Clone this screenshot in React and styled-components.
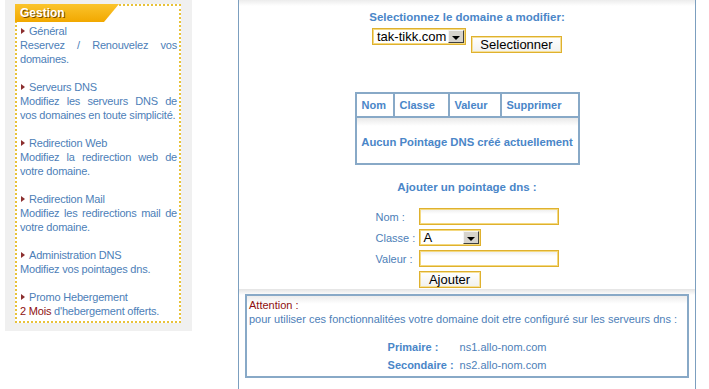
import styled, { createGlobalStyle } from 'styled-components'

const GlobalStyle = createGlobalStyle`
  body {
    margin: 0;
    background: #ffffff;
    font-family: "Liberation Sans", Arial, sans-serif;
    font-size: 11px;
  }
`

const BLUE = '#4d80b8'
const BLUE_BOLD = '#4a86c8'
const GRID = '#88a9c7'
const GOLD = '#dfb12e'
const RED = '#8e0f0f'

const Page = styled.div`
  display: flex;
  align-items: flex-start;
  height: 389px;
  overflow: hidden;
`

/* ---------- left menu ---------- */

const Sidebar = styled.aside`
  width: 187px;
  box-sizing: border-box;
  margin-left: 5px;
  padding: 4px 11px 8px 10px;
  background: #f0f0f0;
`

const MenuBox = styled.div`
  border: 2px dotted #e8c23a;
  background: #ffffff;
`

const MenuTitle = styled.div`
  margin: -2px 0 0 -2px;
  width: 104px;
  height: 18px;
  padding-left: 5px;
  box-sizing: border-box;
  clip-path: polygon(0 0, 100% 0, calc(100% - 15px) 100%, 0 100%);
  background: linear-gradient(#fbc42c, #f2a800);
  color: #ffffff;
  font-size: 12px;
  font-weight: bold;
  line-height: 18px;
  text-shadow: 1px 1px 0 #7a4c00;
`

const MenuList = styled.div`
  padding: 2px 2px 3px 3px;
  color: ${BLUE};
  line-height: 14px;
  letter-spacing: -0.2px;
  text-align: justify;
`

const MenuItem = styled.div`
  & + & {
    margin-top: 14px;
  }
`

const MenuLink = styled.div`
  display: flex;
  align-items: center;
  text-align: left;
`

const Arrow = styled.span`
  width: 0;
  height: 0;
  margin: 0 4px 0 1px;
  border-left: 4px solid #8c2f2f;
  border-top: 3.5px solid transparent;
  border-bottom: 3.5px solid transparent;
`

const Highlight = styled.span`
  color: ${RED};
`

/* ---------- main panel ---------- */

const Main = styled.main`
  margin-left: 46px;
  width: 458px;
  min-height: 389px;
  box-sizing: border-box;
  border-left: 1px solid #7c9fbf;
  border-right: 1px solid #7c9fbf;
  padding-top: 10px;
  background: linear-gradient(#ececec, #ffffff 6px);
  display: flex;
  flex-direction: column;
  align-items: center;
`

const Heading = styled.div`
  margin-top: ${p => p.$top || 0}px;
  color: ${BLUE_BOLD};
  font-size: 11.5px;
  font-weight: bold;
  line-height: 14px;
`

const SelectRow = styled.div`
  margin-top: 4px;
  display: flex;
  align-items: flex-start;
`

const Select = styled.div`
  width: ${p => p.$width}px;
  height: ${p => p.$height}px;
  box-sizing: border-box;
  border: 1px solid ${GOLD};
  box-shadow: inset 0 0 0 1px #f4d980;
  padding: 0 1px 0 4px;
  background: #ffffff;
  display: flex;
  align-items: center;
  justify-content: space-between;
  color: #000000;
  font-size: 13px;
`

const SelectArrow = styled.span`
  width: 16px;
  height: ${p => p.$height}px;
  box-sizing: border-box;
  border: 1px solid;
  border-color: #f4f4f4 #404040 #404040 #f4f4f4;
  background: #d6d3cc;
  display: flex;
  align-items: center;
  justify-content: center;

  &::after {
    content: '';
    margin-top: 2px;
    border-left: 4px solid transparent;
    border-right: 4px solid transparent;
    border-top: 4px solid #000000;
  }
`

const Button = styled.button`
  margin: ${p => p.$margin || 0};
  width: ${p => p.$width}px;
  height: 17px;
  box-sizing: border-box;
  padding: 0;
  border: 1px solid ${GOLD};
  box-shadow: inset 0 0 0 1px #f6e09a;
  background: linear-gradient(#ffffff, #f1f1ee);
  font-family: "Liberation Sans", Arial, sans-serif;
  font-size: 13px;
  line-height: 15px;
  color: #000000;
`

const DnsTable = styled.div`
  margin-top: 39px;
  display: grid;
  grid-template-columns: 38px 55px 52px 76px;
  border: 2px solid ${GRID};
  color: ${BLUE_BOLD};
  font-weight: bold;
  font-size: 11px;
`

const HeadCell = styled.div`
  height: 22px;
  padding-left: 5px;
  border-bottom: 2px solid ${GRID};
  border-right: ${p => (p.$last ? 'none' : `2px solid ${GRID}`)};
  display: flex;
  align-items: center;
  white-space: nowrap;
`

const EmptyCell = styled.div`
  grid-column: 1 / -1;
  height: 45px;
  padding-top: 3px;
  box-sizing: border-box;
  background: linear-gradient(#e9e9e9, #ffffff 8px);
  display: flex;
  align-items: center;
  justify-content: center;
  font-size: 11.3px;
`

const Form = styled.div`
  margin-top: 14px;
  display: grid;
  grid-template-columns: 43px 140px;
  row-gap: 4px;
  align-items: center;
`

const Label = styled.span`
  color: ${BLUE};
  white-space: nowrap;
`

const TextInput = styled.div`
  height: 17px;
  box-sizing: border-box;
  border: 1px solid ${GOLD};
  box-shadow: inset 0 0 0 1px #f4d980;
  background: linear-gradient(#ececec, #ffffff 5px);
`

const NoticeWrap = styled.div`
  align-self: stretch;
  margin-top: 1px;
  padding: 5px 6px 0;
  background: linear-gradient(#e4e4e4, #ffffff 6px);
`

const Notice = styled.div`
  height: 84px;
  box-sizing: border-box;
  border: 2px solid ${GRID};
  padding: 2px 2px 0 2px;
  background: linear-gradient(#ececec, #ffffff 8px);
  color: ${BLUE};
  line-height: 14px;
`

const Servers = styled.div`
  margin: 12px auto 0;
  width: max-content;
  display: grid;
  grid-template-columns: auto auto;
  column-gap: 6px;
  grid-auto-rows: 18px;
  align-items: center;
`

const ServerLabel = styled.span`
  color: ${BLUE_BOLD};
  font-weight: bold;
`

const menu = [
  { title: 'Général', text: 'Reservez / Renouvelez vos domaines.' },
  { title: 'Serveurs DNS', text: 'Modifiez les serveurs DNS de vos domaines en toute simplicité.' },
  { title: 'Redirection Web', text: 'Modifiez la redirection web de votre domaine.' },
  { title: 'Redirection Mail', text: 'Modifiez les redirections mail de votre domaine.' },
  { title: 'Administration DNS', text: 'Modifiez vos pointages dns.' },
]

const App = () => {
  return (
    <>
      <GlobalStyle />
      <Page>
        <Sidebar>
          <MenuBox>
            <MenuTitle>Gestion</MenuTitle>
            <MenuList>
              {menu.map(item => (
                <MenuItem key={item.title}>
                  <MenuLink>
                    <Arrow />
                    {item.title}
                  </MenuLink>
                  <div>{item.text}</div>
                </MenuItem>
              ))}
              <MenuItem>
                <MenuLink>
                  <Arrow />
                  Promo Hebergement
                </MenuLink>
                <div>
                  <Highlight>2 Mois</Highlight> d'hebergement offerts.
                </div>
              </MenuItem>
            </MenuList>
          </MenuBox>
        </Sidebar>

        <Main>
          <Heading>Selectionnez le domaine a modifier:</Heading>
          <SelectRow>
            <Select $width={94} $height={17}>
              tak-tikk.com
              <SelectArrow $height={13} />
            </Select>
            <Button $width={91} $margin="8px 0 0 5px">
              Selectionner
            </Button>
          </SelectRow>

          <DnsTable>
            <HeadCell>Nom</HeadCell>
            <HeadCell>Classe</HeadCell>
            <HeadCell>Valeur</HeadCell>
            <HeadCell $last>Supprimer</HeadCell>
            <EmptyCell>Aucun Pointage DNS créé actuellement</EmptyCell>
          </DnsTable>

          <Heading $top={15}>Ajouter un pointage dns :</Heading>

          <Form>
            <Label>Nom :</Label>
            <TextInput />
            <Label>Classe :</Label>
            <Select $width={62} $height={17}>
              A
              <SelectArrow $height={13} />
            </Select>
            <Label>Valeur :</Label>
            <TextInput />
            <span />
            <Button $width={62}>Ajouter</Button>
          </Form>

          <NoticeWrap>
            <Notice>
              <Highlight>Attention :</Highlight>
              <div>
                pour utiliser ces fonctionnalitées votre domaine doit etre configuré sur les serveurs dns :
              </div>
              <Servers>
                <ServerLabel>Primaire :</ServerLabel>
                <span>ns1.allo-nom.com</span>
                <ServerLabel>Secondaire :</ServerLabel>
                <span>ns2.allo-nom.com</span>
              </Servers>
            </Notice>
          </NoticeWrap>
        </Main>
      </Page>
    </>
  )
}

export default App
